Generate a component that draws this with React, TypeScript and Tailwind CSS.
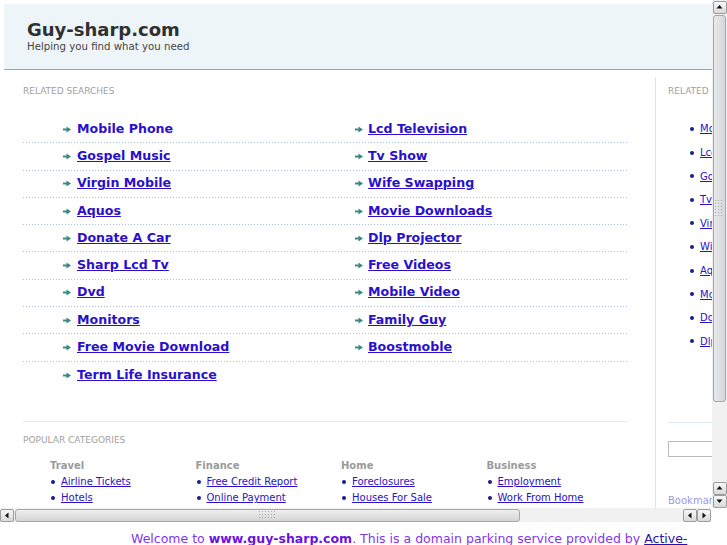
const leftLinks = [
  "Mobile Phone",
  "Gospel Music",
  "Virgin Mobile",
  "Aquos",
  "Donate A Car",
  "Sharp Lcd Tv",
  "Dvd",
  "Monitors",
  "Free Movie Download",
  "Term Life Insurance",
];

const rightLinks = [
  "Lcd Television",
  "Tv Show",
  "Wife Swapping",
  "Movie Downloads",
  "Dlp Projector",
  "Free Videos",
  "Mobile Video",
  "Family Guy",
  "Boostmoble",
];

const sideLinks = [
  "Mobile Phone",
  "Lcd Television",
  "Gospel Music",
  "Tv Show",
  "Virgin Mobile",
  "Wife Swapping",
  "Aquos",
  "Movie Downloads",
  "Donate A Car",
  "Dlp Projector",
];

const categories = [
  { title: "Travel", links: ["Airline Tickets", "Hotels"] },
  { title: "Finance", links: ["Free Credit Report", "Online Payment"] },
  { title: "Home", links: ["Foreclosures", "Houses For Sale"] },
  { title: "Business", links: ["Employment", "Work From Home"] },
];

function Arrow() {
  return (
    <svg width="8" height="7" viewBox="0 0 8 7" className="shrink-0">
      <path d="M0 2.5h3.5V0.5L8 3.5 3.5 6.5V4.5H0z" fill="#3a8a82" />
    </svg>
  );
}

function Dot() {
  return <span className="h-[4px] w-[4px] shrink-0 rounded-full bg-[#1c1c8e]" />;
}

function Tri({ dir }: { dir: "up" | "down" | "left" | "right" }) {
  const d = {
    up: "M0.5 4.5L3.5 1 6.5 4.5z",
    down: "M0.5 1.5L3.5 5 6.5 1.5z",
    left: "M4.5 0.5L1 3.5 4.5 6.5z",
    right: "M1.5 0.5L5 3.5 1.5 6.5z",
  }[dir];
  return (
    <svg width="7" height="7" viewBox="0 0 7 7">
      <path d={d} fill="#111" />
    </svg>
  );
}

function ScrollButton({ dir }: { dir: "up" | "down" | "left" | "right" }) {
  return (
    <div className="flex h-[13px] w-[14px] shrink-0 items-center justify-center rounded-[2px] border border-[#9c9c9c] bg-gradient-to-b from-[#f7f7f7] to-[#dadada]">
      <Tri dir={dir} />
    </div>
  );
}

function Grip({ vertical }: { vertical?: boolean }) {
  const dots = [];
  const cols = vertical ? 3 : 6;
  const rows = vertical ? 6 : 3;
  for (let r = 0; r < rows; r++) {
    for (let c = 0; c < cols; c++) {
      dots.push(<rect key={`${r}-${c}`} x={c * 3} y={r * 3} width="1" height="1" fill="#a8a8a8" />);
    }
  }
  return (
    <svg width={cols * 3} height={rows * 3}>
      {dots}
    </svg>
  );
}

function VerticalScrollbar() {
  return (
    <div className="flex h-[508px] w-[15px] shrink-0 flex-col items-center bg-[#f1f1f1] pt-[1px]">
      <ScrollButton dir="up" />
      <div className="mt-[1px] flex h-[387px] w-[13px] items-center justify-center rounded-[3px] border border-[#a6a6a6] bg-gradient-to-r from-[#e9eaec] to-[#d6d7da]">
        <Grip vertical />
      </div>
      <div className="flex-1" />
      <ScrollButton dir="up" />
      <ScrollButton dir="down" />
    </div>
  );
}

function HorizontalScrollbar() {
  return (
    <div className="flex h-[14px] w-[711px] shrink-0 items-center bg-[#f1f1f1]">
      <ScrollButton dir="left" />
      <div className="ml-[1px] flex h-[13px] w-[505px] items-center justify-center rounded-[3px] border border-[#a6a6a6] bg-gradient-to-b from-[#efefef] to-[#d4d4d4]">
        <Grip />
      </div>
      <div className="flex-1" />
      <ScrollButton dir="left" />
      <ScrollButton dir="right" />
    </div>
  );
}

export default function App() {
  return (
    <div className="h-[545px] w-[727px] overflow-hidden bg-white font-['DejaVu_Sans',Verdana,sans-serif]">
      <div className="flex">
        <div className="relative h-[508px] w-[712px] overflow-hidden pl-[4px] pt-[4px]">
          <div className="w-[760px]">
            <header className="h-[66px] border-b border-[#8ea4dc] bg-[#eef5f8] pl-[23px] pt-[15px]">
              <h1 className="text-[18px] leading-[22px] font-bold text-[#303030]">Guy-sharp.com</h1>
              <p className="text-[10.2px] leading-[12px] text-[#444]">Helping you find what you need</p>
            </header>

            <div className="flex pt-[7px]">
              <section className="w-[651px] shrink-0 pl-[19px] pr-[27px] pt-[8px]">
                <h2 className="text-[9px] leading-[12px] text-[#a0a0a0] uppercase">Related Searches</h2>

                <div className="mt-[19px]">
                  {leftLinks.map((left, i) => {
                    const right = rightLinks[i];
                    const last = i === leftLinks.length - 1;
                    return (
                      <div key={left} className="flex h-[27.3px] flex-col">
                        <div className="flex flex-1 items-center">
                          <div className="flex w-[317px] items-center gap-[6px] pl-[40px]">
                            <Arrow />
                            <a
                              href="#"
                              className={`text-[12.6px] font-bold text-[#2a10cc] ${i === 0 ? "no-underline" : "underline"}`}
                            >
                              {left}
                            </a>
                          </div>
                          {right ? (
                            <div className="flex items-center gap-[5px] pl-[15px]">
                              <Arrow />
                              <a href="#" className="text-[12.6px] font-bold text-[#2a10cc] underline">
                                {right}
                              </a>
                            </div>
                          ) : null}
                        </div>
                        {last ? null : (
                          <div className="h-px bg-[linear-gradient(to_right,#a8c0e6_1px,transparent_1px)] bg-[length:3px_1px]" />
                        )}
                      </div>
                    );
                  })}
                </div>

                <div className="mt-[32px] h-px bg-[#e3ecf5]" />

                <h2 className="mt-[12px] text-[9px] leading-[12px] text-[#a0a0a0] uppercase">Popular Categories</h2>

                <div className="mt-[13px] flex pl-[27px]">
                  {categories.map((cat) => (
                    <div key={cat.title} className="w-[145.5px] shrink-0">
                      <h3 className="text-[10px] leading-[13px] font-bold text-[#9a9a9a]">{cat.title}</h3>
                      <ul className="mt-[2px]">
                        {cat.links.map((link) => (
                          <li key={link} className="flex h-[16px] items-center gap-[6px] pl-[1px]">
                            <Dot />
                            <a href="#" className="whitespace-nowrap text-[10px] text-[#2a10cc] underline">
                              {link}
                            </a>
                          </li>
                        ))}
                      </ul>
                    </div>
                  ))}
                </div>
              </section>

              <aside className="h-[460px] w-[100px] shrink-0 border-l border-[#dbe5f1] pl-[12px] pt-[8px]">
                <h2 className="text-[9px] leading-[12px] text-[#a0a0a0] uppercase">Related</h2>
                <ul className="mt-[20.2px]">
                  {sideLinks.map((link) => (
                    <li key={link} className="flex h-[23.6px] items-center gap-[6px] pl-[22px]">
                      <Dot />
                      <a href="#" className="whitespace-nowrap text-[10px] text-[#2a10cc] underline">
                        {link}
                      </a>
                    </li>
                  ))}
                </ul>
                <div className="mt-[68.8px] h-px bg-[#dde8f5]" />
                <input className="mt-[18px] block h-[16px] w-[80px] border border-[#bcbcbc] bg-white" />
                <p className="mt-[38px] text-[10px] leading-[12px] text-[#9a9ae0]">Bookmark this page</p>
              </aside>
            </div>
          </div>
        </div>
        <VerticalScrollbar />
      </div>
      <div className="flex">
        <HorizontalScrollbar />
        <div className="h-[14px] flex-1 bg-white" />
      </div>
      <div className="h-[23px] overflow-hidden pl-[131px] pt-[9px]">
        <p className="text-[12.5px] leading-[16px] whitespace-nowrap text-[#8533ee]">
          Welcome to <b className="text-[#6b12e0]">www.guy-sharp.com</b>. This is a domain parking service provided by{" "}
          <a href="#" className="text-[#2a10aa] underline">
            Active-
          </a>
        </p>
      </div>
    </div>
  );
}
